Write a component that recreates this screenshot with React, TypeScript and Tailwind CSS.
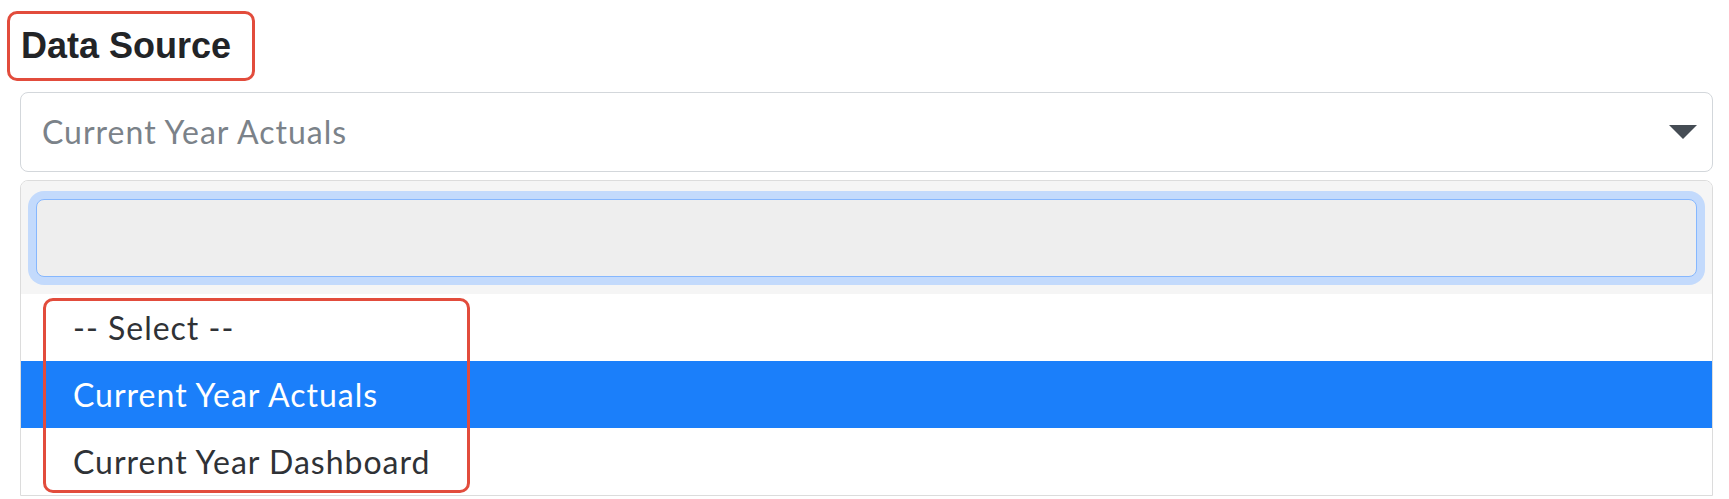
const options = ["-- Select --", "Current Year Actuals", "Current Year Dashboard"]

const App: React.FC = () => {
  const selected = "Current Year Actuals"

  return (
    <div className="min-h-[499px] bg-white pl-[20px] pr-[16px] font-['Lato',sans-serif]">
      {/* label, boxed in red as in the annotated screenshot */}
      <div className="-ml-[13px] pt-[11px]">
        <div className="flex h-[70px] w-[248px] items-center rounded-[10px] border-[3px] border-[#e24c3c] pl-[11px]">
          <span className="font-['Liberation_Sans',Arial,sans-serif] text-[36px] font-bold text-[#222427]">
            Data Source
          </span>
        </div>
      </div>

      <div className="mt-[11px] flex h-[80px] items-center justify-between rounded-[8px] border border-[#d3d7db] pl-[21px] pr-[15px]">
        <span className="text-[32px] tracking-[1px] text-[#7b8289]">Current Year Actuals</span>
        <svg width="28" height="14" viewBox="0 0 28 14" className="block">
          <path d="M0 0h28L14 14z" fill="#454c54" />
        </svg>
      </div>

      <div className="mt-[8px] overflow-hidden rounded-t-[8px] border border-[#dcdcdc]">
        <div className="bg-[#f5f5f5] px-[15px] pb-[17px] pt-[18px]">
          <input
            type="text"
            className="block h-[78px] w-full rounded-[8px] border border-[#86b7fe] bg-[#eeeeee] shadow-[0_0_0_8px_#c3dafc] outline-none"
          />
        </div>
        <div className="relative">
          {options.map((opt) => (
            <div
              key={opt}
              className={
                opt === selected
                  ? "flex h-[67px] items-center bg-[#1b7ffa] pl-[52px] text-[32px] tracking-[1px] text-white"
                  : "flex h-[67px] items-center bg-white pl-[52px] text-[32px] tracking-[1px] text-[#2f3236]"
              }
            >
              {opt}
            </div>
          ))}
          <div className="pointer-events-none absolute left-[22px] top-[4px] h-[195px] w-[427px] rounded-[10px] border-[3px] border-[#e24c3c]" />
        </div>
      </div>
    </div>
  )
}

export default App
